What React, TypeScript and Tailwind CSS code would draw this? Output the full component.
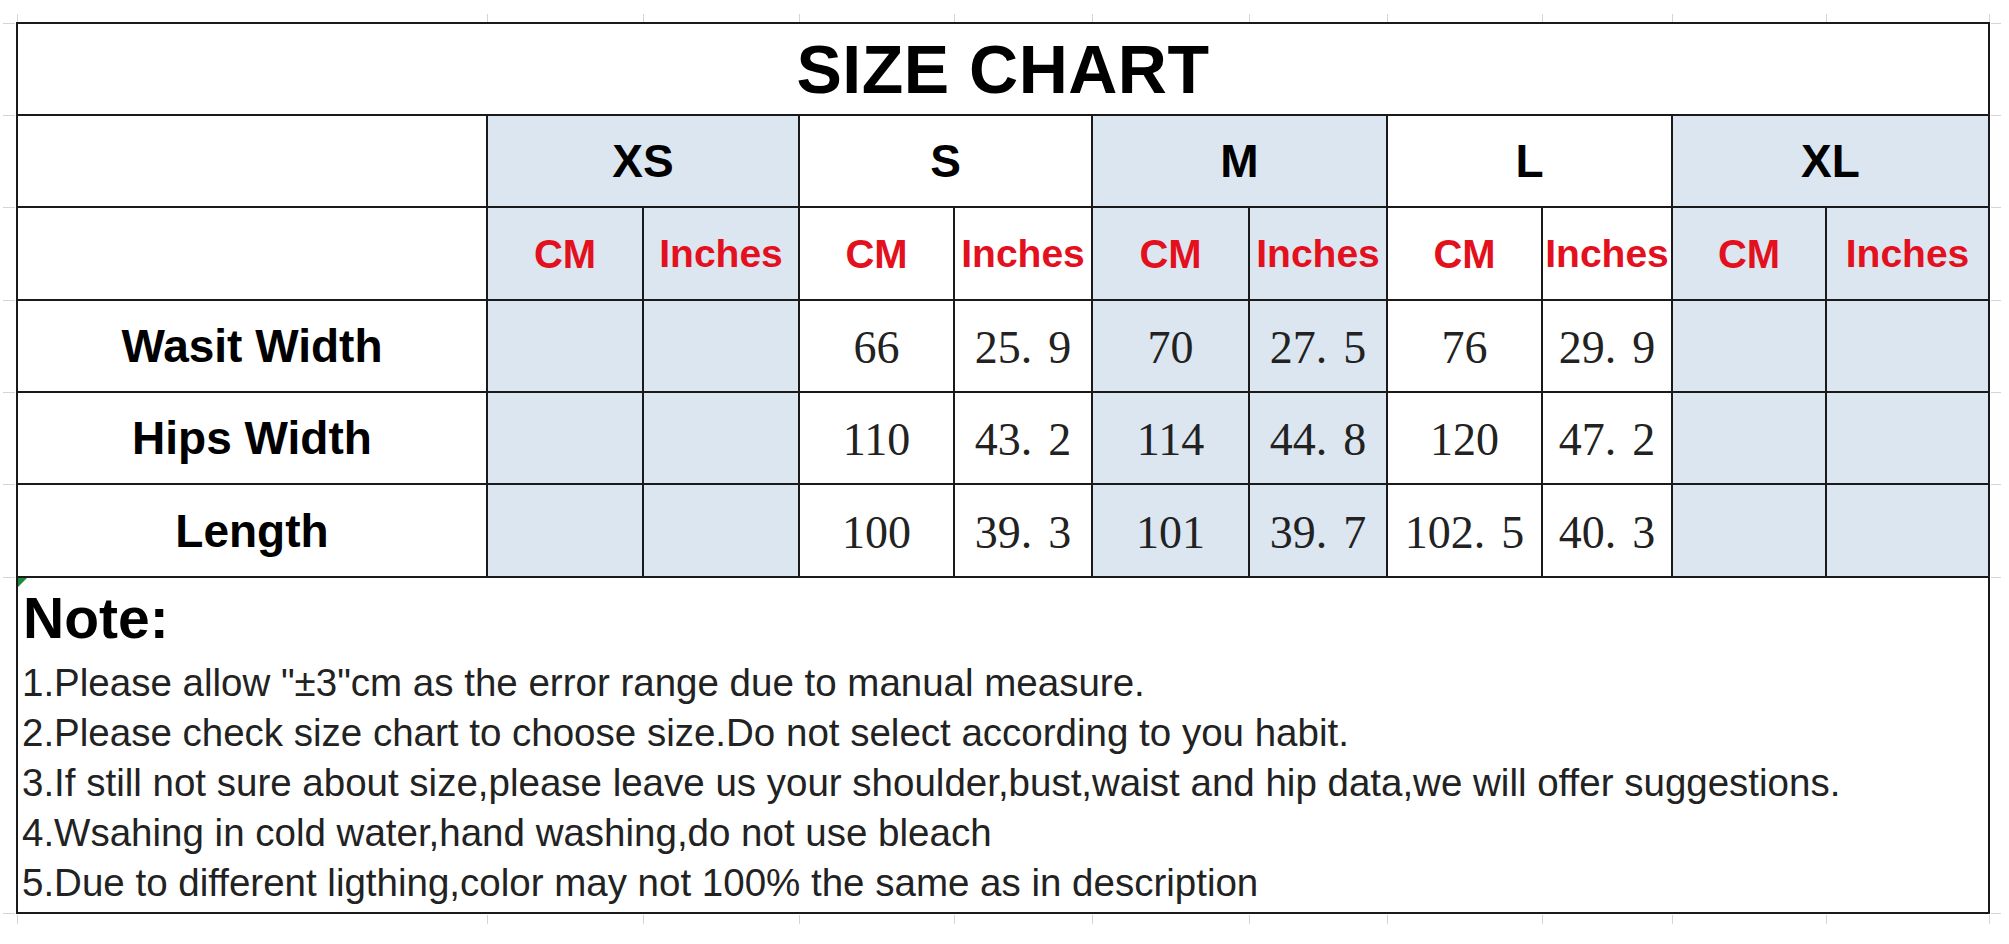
import React from "react";

const BLUE = "bg-[#dce6f1]";
const WHITE = "bg-white";

const sizes = [
  { name: "XS", bg: BLUE },
  { name: "S", bg: WHITE },
  { name: "M", bg: BLUE },
  { name: "L", bg: WHITE },
  { name: "XL", bg: BLUE },
];

const rows: { label: string; values: string[] }[] = [
  { label: "Wasit Width", values: ["", "", "66", "25.9", "70", "27.5", "76", "29.9", "", ""] },
  { label: "Hips Width", values: ["", "", "110", "43.2", "114", "44.8", "120", "47.2", "", ""] },
  { label: "Length", values: ["", "", "100", "39.3", "101", "39.7", "102.5", "40.3", "", ""] },
];

const notes = [
  '1.Please allow "±3"cm as the error range due to manual measure.',
  "2.Please check size chart to choose size.Do not select according to you habit.",
  "3.If still not sure about size,please leave us your shoulder,bust,waist and hip data,we will offer suggestions.",
  "4.Wsahing in cold water,hand washing,do not use bleach",
  "5.Due to different ligthing,color may not 100% the same as in description",
];

function Num({ v }: { v: string }) {
  if (!v) return null;
  const i = v.indexOf(".");
  if (i < 0) return <>{v}</>;
  return (
    <>
      {v.slice(0, i)}
      <span className="inline-block w-[0.6em] text-left">.</span>
      {v.slice(i + 1)}
    </>
  );
}

const sans = "font-['Liberation_Sans',Arial,sans-serif]";
const serif = "font-['Liberation_Serif','Times_New_Roman',serif]";

export default function App() {
  const colTicks = [17, 487, 643, 799, 954, 1092, 1249, 1387, 1542, 1672, 1826, 1989];
  const rowTicks = [23, 115, 207, 300, 392, 484, 577, 913];
  return (
    <div className="relative w-[2009px] h-[944px] bg-white overflow-hidden">
      {colTicks.map((x) => (
        <React.Fragment key={"c" + x}>
          <div className="absolute top-[14px] h-[8px] w-[1px] bg-[#d4d4d4]" style={{ left: x }} />
          <div className="absolute top-[915px] h-[9px] w-[1px] bg-[#d4d4d4]" style={{ left: x }} />
        </React.Fragment>
      ))}
      {rowTicks.map((y) => (
        <React.Fragment key={"r" + y}>
          <div className="absolute left-[3px] w-[12px] h-[1px] bg-[#d4d4d4]" style={{ top: y }} />
          <div className="absolute left-[1991px] w-[10px] h-[1px] bg-[#d4d4d4]" style={{ top: y }} />
        </React.Fragment>
      ))}
      <div
        className={`relative ml-[16px] mt-[22px] w-[1974px] grid grid-cols-[468px_154px_154px_153px_136px_155px_136px_153px_128px_152px_161px] grid-rows-[90px_90px_91px_90px_90px_91px_334px] gap-[2px] p-[2px] bg-[#1a1a1a] ${sans}`}
      >
        {/* Title */}
        <div className="col-span-11 bg-white flex items-center justify-center text-[68px] font-bold text-black leading-none tracking-[0.5px]">
          SIZE CHART
        </div>

        {/* Size header */}
        <div className="bg-white" />
        {sizes.map((s) => (
          <div
            key={s.name}
            className={`col-span-2 ${s.bg} flex items-center justify-center text-[46px] font-bold text-black leading-none`}
          >
            {s.name}
          </div>
        ))}

        {/* Units header */}
        <div className="bg-white" />
        {sizes.map((s) => (
          <React.Fragment key={"u" + s.name}>
            <div className={`${s.bg} flex items-center justify-center text-[40px] font-bold text-[#e3101e] leading-none`}>
              CM
            </div>
            <div className={`${s.bg} flex items-center justify-center text-[39px] font-bold text-[#e3101e] leading-none whitespace-nowrap`}>
              Inches
            </div>
          </React.Fragment>
        ))}

        {/* Data rows */}
        {rows.map((r) => (
          <React.Fragment key={r.label}>
            <div className="bg-white flex items-center justify-center text-[46px] font-bold text-black leading-none">
              {r.label}
            </div>
            {r.values.map((v, i) => (
              <div
                key={i}
                className={`${sizes[Math.floor(i / 2)].bg} flex items-center justify-center text-[46px] text-[#222] leading-none whitespace-nowrap pt-[4px] ${serif}`}
              >
                <Num v={v} />
              </div>
            ))}
          </React.Fragment>
        ))}

        {/* Notes */}
        <div className="relative col-span-11 bg-white flex flex-col pt-[10px]">
          <div className="absolute left-0 top-0 w-0 h-0 border-t-[9px] border-t-[#1f8a3c] border-r-[9px] border-r-transparent" />
          <div className="pl-[5px] text-[57px] font-bold text-black leading-[60px]">Note:</div>
          <div className="mt-[10px] pl-[4px] flex flex-col text-[38.5px] text-[#222] leading-[50px] whitespace-nowrap">
            {notes.map((n) => (
              <div key={n}>{n}</div>
            ))}
          </div>
        </div>
      </div>
    </div>
  );
}
